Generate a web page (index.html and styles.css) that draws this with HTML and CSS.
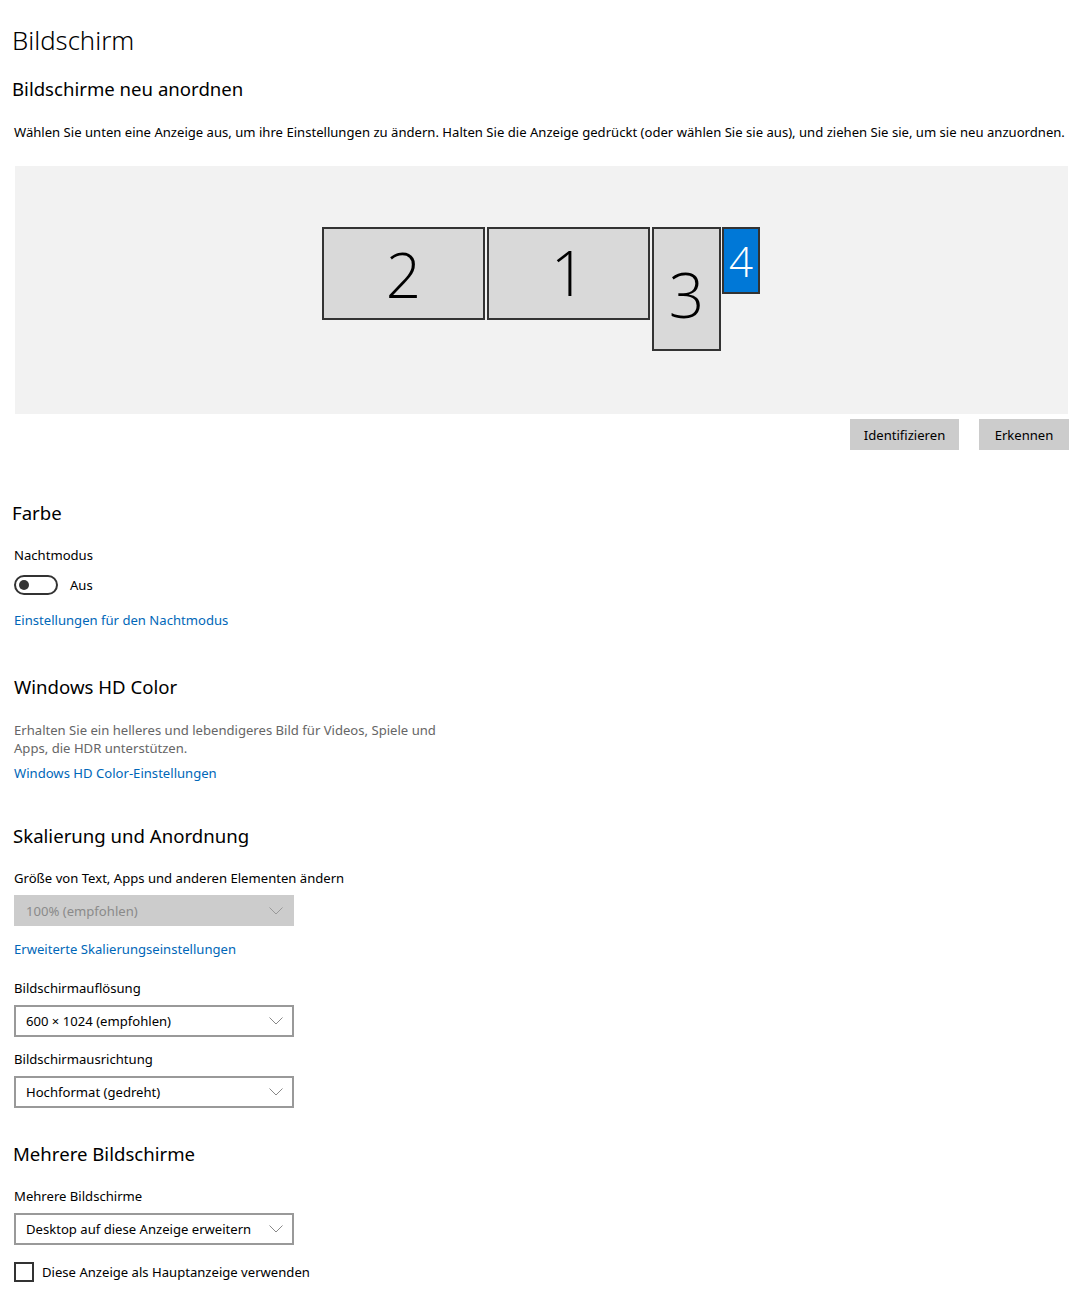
FILE: index.html
```html
<!DOCTYPE html>
<html lang="de">

<head>
    <meta charset="UTF-8">
    <title>Bildschirm</title>
    <link rel="stylesheet" href="styles.css">
</head>

<body>
    <h1 class="page-title">Bildschirm</h1>

    <h2 class="section-title first">Bildschirme neu anordnen</h2>
    <p class="intro">Wählen Sie unten eine Anzeige aus, um ihre Einstellungen zu ändern. Halten Sie die Anzeige gedrückt (oder wählen Sie sie aus), und ziehen Sie sie, um sie neu anzuordnen.</p>

    <div class="arrange">
        <div class="monitors">
            <div class="monitor m2"><span>2</span></div>
            <div class="monitor m1"><span>1</span></div>
            <div class="monitor m3"><span>3</span></div>
            <div class="monitor m4 active"><span>4</span></div>
        </div>
    </div>
    <div class="arrange-buttons">
        <button class="btn">Identifizieren</button>
        <button class="btn">Erkennen</button>
    </div>

    <h2 class="section-title farbe">Farbe</h2>
    <div class="label">Nachtmodus</div>
    <div class="toggle-row">
        <span class="toggle"><span class="knob"></span></span>
        <span>Aus</span>
    </div>
    <a class="link night-link" href="#">Einstellungen für den Nachtmodus</a>

    <h2 class="section-title hd">Windows HD Color</h2>
    <p class="muted">Erhalten Sie ein helleres und lebendigeres Bild für Videos, Spiele und Apps, die HDR unterstützen.</p>
    <a class="link" href="#">Windows HD Color-Einstellungen</a>

    <h2 class="section-title scale">Skalierung und Anordnung</h2>
    <div class="label">Größe von Text, Apps und anderen Elementen ändern</div>
    <div class="select disabled">
        <span>100% (empfohlen)</span>
        <svg class="chevron" width="14" height="8" viewBox="0 0 14 8"><path d="M0.5 0.5 L7 7 L13.5 0.5" fill="none" stroke="currentColor" stroke-width="1"/></svg>
    </div>
    <a class="link scale-link" href="#">Erweiterte Skalierungseinstellungen</a>

    <div class="label gap">Bildschirmauflösung</div>
    <div class="select">
        <span>600 × 1024 (empfohlen)</span>
        <svg class="chevron" width="14" height="8" viewBox="0 0 14 8"><path d="M0.5 0.5 L7 7 L13.5 0.5" fill="none" stroke="currentColor" stroke-width="1"/></svg>
    </div>

    <div class="label gap-sm">Bildschirmausrichtung</div>
    <div class="select">
        <span>Hochformat (gedreht)</span>
        <svg class="chevron" width="14" height="8" viewBox="0 0 14 8"><path d="M0.5 0.5 L7 7 L13.5 0.5" fill="none" stroke="currentColor" stroke-width="1"/></svg>
    </div>

    <h2 class="section-title multi">Mehrere Bildschirme</h2>
    <div class="label">Mehrere Bildschirme</div>
    <div class="select">
        <span>Desktop auf diese Anzeige erweitern</span>
        <svg class="chevron" width="14" height="8" viewBox="0 0 14 8"><path d="M0.5 0.5 L7 7 L13.5 0.5" fill="none" stroke="currentColor" stroke-width="1"/></svg>
    </div>

    <label class="check-row">
        <span class="checkbox"></span>
        <span>Diese Anzeige als Hauptanzeige verwenden</span>
    </label>
</body>

</html>
```

FILE: styles.css
```css
body {
    margin: 0;
    padding: 0 14px;
    font-family: "Noto Sans", "Open Sans", sans-serif;
    font-size: 13.1px;
    color: #000;
    background: #fff;
}

.page-title {
    margin: 22px 0 0 -2px;
    font-size: 25.7px;
    font-weight: 300;
    line-height: 38px;
}

.section-title {
    margin: 0;
    font-size: 18.6px;
    font-weight: 400;
    line-height: 28px;
}

.section-title.first {
    margin: 15px 0 0 -2px;
}

.intro {
    margin: 19px 0 0;
    line-height: 20px;
    white-space: nowrap;
}

/* monitor arrangement canvas */
.arrange {
    margin: 24px 4px 0 1px;
    height: 248px;
    background: #f2f2f2;
    position: relative;
}

.monitors {
    position: absolute;
    left: 307px;
    top: 61px;
}

.monitor {
    position: absolute;
    box-sizing: border-box;
    border: 2px solid #333;
    background: #d9d9d9;
    display: flex;
    align-items: center;
    justify-content: center;
    font-family: "Open Sans", "Noto Sans", sans-serif;
    font-weight: 300;
    color: #000;
}

.monitor span {
    font-size: 62px;
    line-height: 1;
}

.m2 { left: 0; top: 0; width: 163px; height: 93px; }
.m1 { left: 165px; top: 0; width: 163px; height: 93px; }
.m1 span { margin-top: -4px; }
.m3 { left: 330px; top: 0; width: 69px; height: 124px; }
.m3 span { margin-top: 10px; }
.m4 { left: 400px; top: 0; width: 38px; height: 67px; }
.m4 span { font-size: 42px; margin-top: 0; }

.monitor.active {
    background: #0078d7;
    color: #fff;
}

.arrange-buttons {
    display: flex;
    justify-content: flex-end;
    gap: 20px;
    margin: 5px 3px 0 0;
}

.btn {
    border: none;
    background: #cccccc;
    font-family: inherit;
    font-size: 13.1px;
    color: #000;
    height: 31px;
    padding: 0 10px;
}

.btn:first-child {
    width: 109px;
}

.btn:last-child {
    width: 90px;
}

.section-title.farbe {
    margin: 49px 0 0 -2px;
}

.label {
    margin-top: 18px;
    line-height: 20px;
}

.toggle-row {
    display: flex;
    align-items: center;
    gap: 12px;
    margin-top: 10px;
    height: 20px;
}

.toggle {
    box-sizing: border-box;
    width: 44px;
    height: 20px;
    border: 2px solid #333;
    border-radius: 10px;
    display: flex;
    align-items: center;
    padding-left: 3px;
}

.knob {
    width: 10px;
    height: 10px;
    border-radius: 50%;
    background: #333;
}

.link {
    display: block;
    color: #0067b8;
    text-decoration: none;
    line-height: 20px;
}

.night-link {
    margin-top: 15px;
}

.section-title.hd {
    margin-top: 43px;
}

.muted {
    margin: 20px 0 0;
    width: 440px;
    color: #666;
    line-height: 18px;
}

.muted + .link {
    margin-top: 6px;
}

.section-title.scale {
    margin: 39px 0 0 -1px;
}

.select {
    box-sizing: border-box;
    width: 280px;
    height: 32px;
    margin-top: 7px;
    border: 2px solid #999;
    display: flex;
    align-items: center;
    justify-content: space-between;
    padding: 0 9px 0 10px;
    color: #000;
}

.select .chevron {
    color: #888;
}

.select.disabled {
    border-color: #ccc;
    background: #ccc;
    color: #8a8a8a;
    height: 31px;
}

.select.disabled .chevron {
    color: #999;
}

.scale-link {
    margin-top: 13px;
}

.label.gap {
    margin-top: 19px;
}

.label.gap-sm {
    margin-top: 12px;
}

.section-title.multi {
    margin: 32px 0 0 -1px;
}

.check-row {
    display: flex;
    align-items: center;
    gap: 8px;
    margin-top: 17px;
}

.checkbox {
    box-sizing: border-box;
    width: 20px;
    height: 20px;
    border: 2px solid #333;
}
```
